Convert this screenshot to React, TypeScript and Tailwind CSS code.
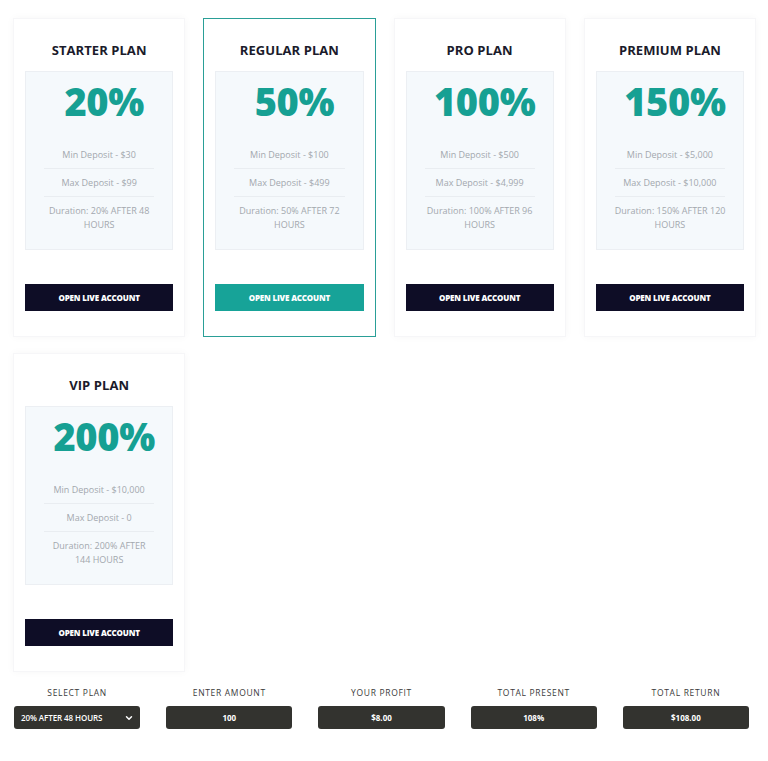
import React from "react";

type Plan = {
  name: string;
  pct: string;
  min: string;
  max: string;
  d1: string;
  d2: string;
  featured?: boolean;
};

const plans: Plan[] = [
  { name: "STARTER PLAN", pct: "20%", min: "Min Deposit - $30", max: "Max Deposit - $99", d1: "Duration: 20% AFTER 48", d2: "HOURS" },
  { name: "REGULAR PLAN", pct: "50%", min: "Min Deposit - $100", max: "Max Deposit - $499", d1: "Duration: 50% AFTER 72", d2: "HOURS", featured: true },
  { name: "PRO PLAN", pct: "100%", min: "Min Deposit - $500", max: "Max Deposit - $4,999", d1: "Duration: 100% AFTER 96", d2: "HOURS" },
  { name: "PREMIUM PLAN", pct: "150%", min: "Min Deposit - $5,000", max: "Max Deposit - $10,000", d1: "Duration: 150% AFTER 120", d2: "HOURS" },
  { name: "VIP PLAN", pct: "200%", min: "Min Deposit - $10,000", max: "Max Deposit - 0", d1: "Duration: 200% AFTER", d2: "144 HOURS" },
];

function PlanCard({ p }: { p: Plan }) {
  return (
    <div
      className={
        "flex flex-col items-stretch bg-white px-[11px] pt-[22px] pb-[25px] h-[319px] " +
        (p.featured
          ? "border border-[#2a9f97]"
          : "border border-[#f6f6f8] shadow-[0_0_8px_rgba(0,0,0,0.035)]")
      }
    >
      <div className="text-center text-[13px] leading-[18px] font-bold text-[#1b1b2b] tracking-[0.005em]">
        {p.name}
      </div>
      <div className="mt-[12px] h-[180px] bg-[#f5f9fc] border border-[#eceff3] flex flex-col items-center">
        <div className="mt-[6px] pl-[10px] h-[46px] leading-[46px] text-[38px] font-extrabold text-[#16a093] tracking-[-0.01em]">
          {p.pct}
        </div>
        <div className="mt-[17px] w-full px-[18px] text-[9px] leading-[14px] text-[#a3a8ae] text-center whitespace-nowrap">
          <div className="py-[6.5px] border-b border-[#e9edf1]">{p.min}</div>
          <div className="py-[6.5px] border-b border-[#e9edf1]">{p.max}</div>
          <div className="py-[6.5px]">
            {p.d1}
            <br />
            {p.d2}
          </div>
        </div>
      </div>
      <button
        className={
          "mt-[34px] h-[27px] w-full flex items-center justify-center text-white text-[8px] font-extrabold tracking-[-0.02em] " +
          (p.featured ? "bg-[#17a398]" : "bg-[#0e0d26]")
        }
      >
        OPEN LIVE ACCOUNT
      </button>
    </div>
  );
}

function Field({ label, value, select }: { label: string; value: string; select?: boolean }) {
  return (
    <div className="flex flex-col items-stretch">
      <div className="text-center text-[8.5px] leading-[12px] font-medium tracking-[0.08em] text-[#3b3b3b]">
        {label}
      </div>
      <div
        className={
          "mt-[7px] h-[23px] rounded-[3px] bg-[#33332f] text-white text-[8px] font-bold flex items-center " +
          (select ? "justify-between pl-[7px] pr-[6px] font-semibold" : "justify-center")
        }
      >
        <span className={select ? "tracking-[-0.01em]" : ""}>{value}</span>
        {select && (
          <svg width="10" height="10" viewBox="0 0 24 24" fill="none" stroke="white" strokeWidth="3.5" strokeLinecap="round" strokeLinejoin="round">
            <path d="M6 9l6 6 6-6" />
          </svg>
        )}
      </div>
    </div>
  );
}

export default function App() {
  return (
    <div
      className="w-[768px] min-h-[761px] bg-white pt-[18px]"
      style={{ fontFamily: '"Open Sans", "Noto Sans", sans-serif' }}
    >
      <div className="grid grid-cols-4 gap-x-[18px] gap-y-[16px] pl-[13px] pr-[12px]">
        {plans.map((p) => (
          <PlanCard key={p.name} p={p} />
        ))}
      </div>
      <div className="mt-[15px] grid grid-cols-5 gap-x-[26px] pl-[14px] pr-[19px]">
        <Field label="SELECT PLAN" value="20% AFTER 48 HOURS" select />
        <Field label="ENTER AMOUNT" value="100" />
        <Field label="YOUR PROFIT" value="$8.00" />
        <Field label="TOTAL PRESENT" value="108%" />
        <Field label="TOTAL RETURN" value="$108.00" />
      </div>
    </div>
  );
}
